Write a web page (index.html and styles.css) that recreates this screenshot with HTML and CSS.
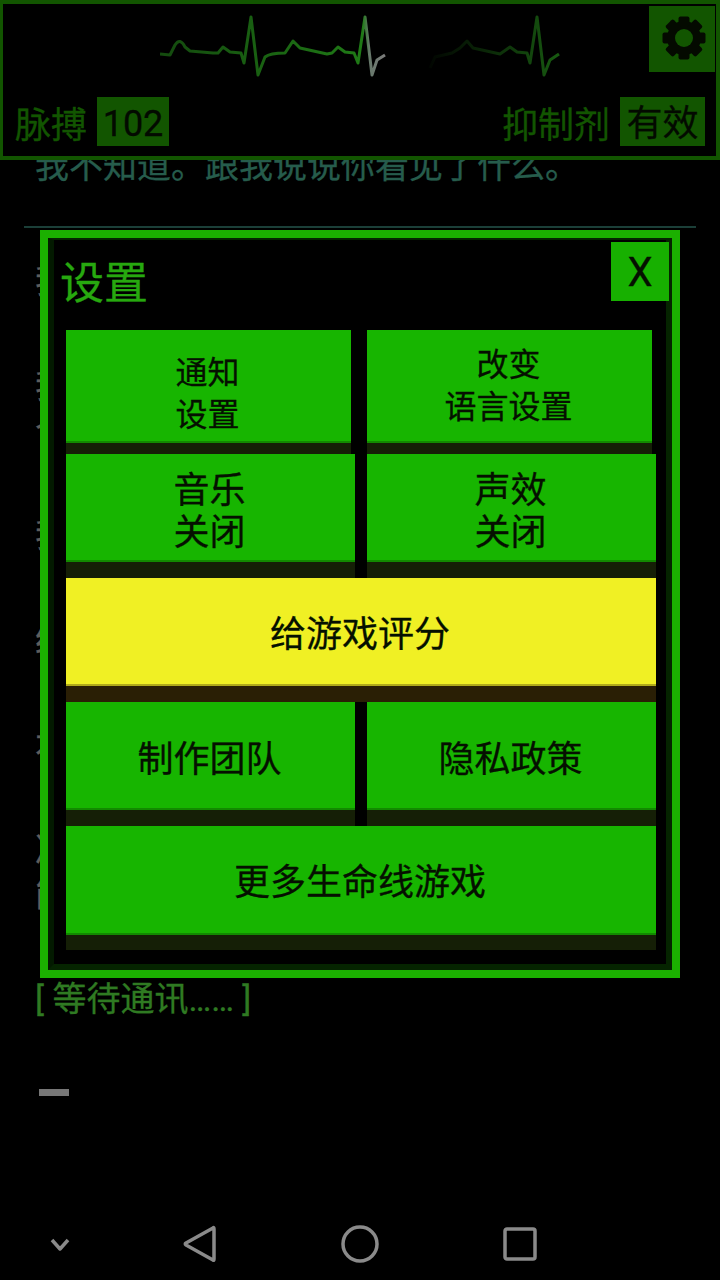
FILE: index.html
```html
<!DOCTYPE html>
<html lang="zh-CN">
<head>
    <meta charset="UTF-8">
    <meta name="viewport" content="width=device-width, initial-scale=1.0">
    <title>设置</title>
    <link rel="stylesheet" href="styles.css">
</head>
<body>

    <header class="status">
        <div class="status-top">
            <svg class="ecg" width="400" height="74" viewBox="160 6 400 74">
                <defs>
                    <linearGradient id="traceHead" gradientUnits="userSpaceOnUse" x1="160" y1="0" x2="385" y2="0">
                        <stop offset="0" stop-color="#1c6a14" stop-opacity="0.7"/>
                        <stop offset="0.9" stop-color="#1f7a16"/>
                        <stop offset="0.93" stop-color="#66786a"/>
                        <stop offset="1" stop-color="#7c7c7c"/>
                    </linearGradient>
                    <linearGradient id="traceTail" gradientUnits="userSpaceOnUse" x1="425" y1="0" x2="559" y2="0">
                        <stop offset="0" stop-color="#1c6a14" stop-opacity="0.03"/>
                        <stop offset="0.5" stop-color="#1c6a14" stop-opacity="0.4"/>
                        <stop offset="1" stop-color="#1c6a14" stop-opacity="0.85"/>
                    </linearGradient>
                </defs>
                <path class="trace" stroke="url(#traceHead)" d="M160 54 L170 55 L175 45 Q180 37 185 47 L190 51 L213 53 L218 53 L223 47 L230 52 L241 53 L244 63 L251 17 L258 75 L265 57 Q270 53 285 53 L293 41 L300 48 L327 54 L332 53 L338 47 L345 52 L354 53 L358 63 L365 17 L372 75 L377 60 L385 55"/>
                <path class="trace" stroke="url(#traceTail)" d="M430 68 L435 57 L452 53 L460 48 L467 41 L473 48 L500 54 L510 47 L517 52 L527 53 L530 63 L537 17 L544 75 L550 60 L559 54"/>
            </svg>
            <button class="gear" type="button" aria-label="设置">
                <svg width="66" height="66" viewBox="0 0 66 66">
                    <g fill="#040a00" transform="translate(35 32)">
                        <circle r="17"/>
                        <rect x="-5.5" y="-21.5" width="11" height="43" rx="2"/>
                        <rect x="-5.5" y="-21.5" width="11" height="43" rx="2" transform="rotate(45)"/>
                        <rect x="-5.5" y="-21.5" width="11" height="43" rx="2" transform="rotate(90)"/>
                        <rect x="-5.5" y="-21.5" width="11" height="43" rx="2" transform="rotate(135)"/>
                        <circle r="9" fill="#125500"/>
                    </g>
                </svg>
            </button>
        </div>
        <div class="status-row">
            <div class="stat">
                <span>脉搏</span>
                <span class="stat-value stat-num">102</span>
            </div>
            <div class="stat">
                <span>抑制剂</span>
                <span class="stat-value stat-word">有效</span>
            </div>
        </div>
    </header>

    <main class="story">
        <p class="line-first">我不知道。跟我说说你看见了什么。</p>
        <hr class="divider">
        <p class="line-old">我</p>
        <p class="line-old">我<br>个</p>
        <p class="line-old">我</p>
        <p class="line-old">给</p>
        <p class="line-old">本</p>
        <p class="line-old">决<br>能</p>
        <p class="line-wait">[ 等待通讯…… ]</p>
        <div class="cursor"></div>
    </main>

    <nav class="navbar">
        <svg width="20" height="13" viewBox="0 0 20 13"><path class="nav-icon" d="M2 2 L10 11 L18 2"/></svg>
        <svg width="34" height="38" viewBox="0 0 34 38"><path class="nav-icon" d="M30 3 Q31 2 31 4 L31 34 Q31 36 30 35 L3 20 Q1.500 19 3 18 Z"/></svg>
        <svg width="38" height="38" viewBox="0 0 38 38"><circle class="nav-icon" cx="19" cy="19" r="17"/></svg>
        <svg width="34" height="34" viewBox="0 0 34 34"><rect class="nav-icon" x="2" y="2" width="30" height="30" rx="2"/></svg>
    </nav>

    <section class="modal">
        <div class="modal-inner">
            <h2 class="modal-title">设置</h2>
            <button class="close" type="button">X</button>

            <div class="btn-row btn-row-small">
                <button class="btn btn-small btn-low" type="button">通知<br>设置</button>
                <button class="btn btn-small btn-high" type="button">改变<br>语言设置</button>
            </div>
            <div class="btn-row">
                <button class="btn" type="button">音乐<br>关闭</button>
                <button class="btn" type="button">声效<br>关闭</button>
            </div>
            <div class="btn-row">
                <button class="btn btn-yellow" type="button">给游戏评分</button>
            </div>
            <div class="btn-row">
                <button class="btn" type="button">制作团队</button>
                <button class="btn" type="button">隐私政策</button>
            </div>
            <div class="btn-row">
                <button class="btn btn-last" type="button">更多生命线游戏</button>
            </div>
        </div>
    </section>

</body>
</html>
```

FILE: styles.css
```css
* {
    box-sizing: border-box;
}

body {
    position: relative;
    display: flex;
    flex-direction: column;
    width: 720px;
    height: 1280px;
    margin: 0;
    overflow: hidden;
    background-color: #000;
    font-family: Roboto, "Noto Sans CJK SC", sans-serif;
    -webkit-text-stroke: 0.3px;
}

button {
    font-family: inherit;
    border: none;
    padding: 0;
    cursor: pointer;
}

/* top status panel */
.status {
    position: relative;
    z-index: 1;
    flex: none;
    height: 160px;
    border: 4px solid #125500;
    border-left-width: 3px;
    background-color: #000;
}

.status-top {
    display: flex;
    align-items: flex-start;
    height: 68px;
    padding: 2px 1px 0 157px;
}

.ecg {
    display: block;
    filter: blur(0.6px);
}

.trace {
    fill: none;
    stroke-width: 3;
    stroke-linejoin: round;
}

.gear {
    display: block;
    width: 66px;
    height: 66px;
    margin-left: auto;
    background-color: #125500;
}

.gear svg {
    display: block;
    filter: blur(0.4px);
}

.status-row {
    display: flex;
    justify-content: space-between;
    margin-top: 25px;
    padding: 0 11px 0 12px;
}

.stat {
    display: flex;
    align-items: center;
    gap: 10px;
    height: 49px;
    color: #125500;
    font-size: 36px;
}

.stat-value {
    height: 49px;
    background-color: #125500;
    color: #030a00;
    line-height: 54px;
    text-align: center;
}

.stat-num {
    width: 72px;
}

.stat-word {
    width: 85px;
}

/* story text behind the dialog */
.story {
    flex: 1;
    min-height: 0;
    overflow: hidden;
}

.story p {
    margin: 0;
    padding-left: 35px;
    font-size: 34px;
    line-height: 44px;
}

.story .line-first {
    margin-top: -16px;
    color: #265c4c;
}

.divider {
    height: 2px;
    margin: 38px 24px 31px;
    border: none;
    background-color: #1b3f38;
}

.story p + p {
    margin-top: 61px;
}

.story .line-old {
    color: #5e5e5e;
}

.story .line-wait {
    color: #2f7a22;
}

.cursor {
    width: 30px;
    height: 7px;
    margin: 68px 0 0 39px;
    background-color: #777;
}

/* android navigation */
.navbar {
    display: grid;
    flex: none;
    grid-template-columns: 120px 160px 160px 160px;
    justify-items: center;
    align-items: center;
    height: 72px;
}

.navbar svg {
    display: block;
}

.nav-icon {
    fill: none;
    stroke: #8a8a8a;
    stroke-width: 3.5;
    stroke-linejoin: round;
}

/* settings dialog */
.modal {
    position: absolute;
    top: 230px;
    left: 40px;
    z-index: 2;
    width: 640px;
    height: 748px;
    border: 8px solid #1bb000;
    background-color: #000;
}

.modal-inner {
    position: relative;
    height: 100%;
    padding: 0 10px 0 12px;
    border: 6px solid #052400;
    border-top-width: 2px;
    border-left-color: #031a00;
}

.modal-title {
    height: 90px;
    margin: 0 0 0 -6px;
    color: #27a80f;
    font-size: 44px;
    font-weight: 400;
    line-height: 88px;
}

.close {
    position: absolute;
    top: 2px;
    right: -3px;
    width: 58px;
    height: 59px;
    padding-top: 2px;
    background-color: #17b000;
    color: #051000;
    font-size: 40px;
}

.btn-row {
    display: flex;
    gap: 12px;
}

.btn-row-small {
    gap: 16px;
    padding-right: 4px;
}

.btn {
    flex: 1;
    height: 124px;
    padding: 7px 2px 0 0;
    border-bottom: 16px solid #151f06;
    box-shadow: inset 0 -2px #128a00;
    background-color: #17b500;
    color: #051000;
    font-size: 36px;
    line-height: 42px;
}

.btn-small {
    border-bottom-width: 11px;
    font-size: 32px;
}

.btn-low {
    padding-top: 15px;
}

.btn-high {
    padding-top: 0;
    padding-bottom: 1px;
}

.btn-yellow {
    padding-top: 5px;
    border-bottom-color: #2a1f05;
    box-shadow: inset 0 -2px #b0aa1a;
    background-color: #f0f024;
}

.btn-last {
    padding-top: 5px;
    border-bottom-width: 15px;
}
```
